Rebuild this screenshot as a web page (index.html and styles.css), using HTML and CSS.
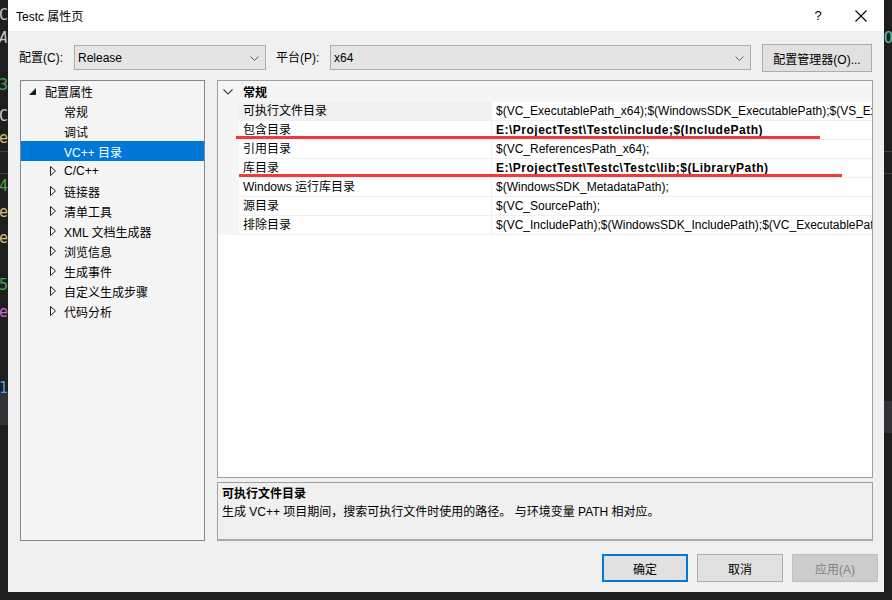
FILE: index.html
```html
<!DOCTYPE html>
<html lang="zh-CN">
<head>
<meta charset="utf-8">
<title>Testc 属性页</title>
<link rel="stylesheet" href="styles.css">
</head>
<body>
<div class="screen">
  <div class="edge edge-left">
    <div class="code c-light m7">cC</div>
    <div class="code c-light it m7">eA</div>
    <div class="code c-green m31">3</div>
    <div class="code c-light m15">cC</div>
    <div class="code c-tan m6">te</div>
    <div class="rule m5"></div>
    <div class="rule m21"></div>
    <div class="code c-green m4">4</div>
    <div class="code c-tan m10">te</div>
    <div class="code c-tan m10">te</div>
    <div class="code c-green m31">5</div>
    <div class="code c-purple m11">e(</div>
    <div class="code c-blue m60">1</div>
    <div class="band"></div>
  </div>

  <div class="dialog">
    <div class="titlebar">
      <span class="title">Testc 属性页</span>
      <div class="tb-actions">
        <span class="tb-help">?</span>
        <svg class="tb-close" width="12" height="12" viewBox="0 0 12 12"><path d="M0.5 0.5 L11.5 11.5 M11.5 0.5 L0.5 11.5" stroke="#000" stroke-width="1.1" fill="none"/></svg>
      </div>
    </div>

    <div class="config-row">
      <span class="lbl lbl-config">配置(C):</span>
      <div class="combo combo-config">
        <span>Release</span>
        <svg class="chev" width="9" height="5" viewBox="0 0 9 5"><path d="M0.5 0.5 L4.5 4.5 L8.5 0.5" stroke="#606060" fill="none"/></svg>
      </div>
      <span class="lbl lbl-platform">平台(P):</span>
      <div class="combo combo-platform">
        <span>x64</span>
        <svg class="chev" width="9" height="5" viewBox="0 0 9 5"><path d="M0.5 0.5 L4.5 4.5 L8.5 0.5" stroke="#606060" fill="none"/></svg>
      </div>
      <button class="btn btn-mgr">配置管理器(O)...</button>
    </div>

    <div class="main">
      <div class="tree">
        <div class="node lvl0">
          <span class="arrow"><svg width="7" height="7" viewBox="0 0 7 7"><path d="M7 0 L7 7 L0 7 Z" fill="#1e1e1e"/></svg></span>
          <span>配置属性</span>
        </div>
        <div class="node lvl1"><span class="arrow"></span><span>常规</span></div>
        <div class="node lvl1"><span class="arrow"></span><span>调试</span></div>
        <div class="node lvl1 selected"><span class="arrow"></span><span>VC++ 目录</span></div>
        <div class="node lvl1"><span class="arrow"><svg width="6" height="10" viewBox="0 0 6 10"><path d="M0.5 0.5 L5.5 5 L0.5 9.5 Z" stroke="#1e1e1e" fill="none"/></svg></span><span>C/C++</span></div>
        <div class="node lvl1"><span class="arrow"><svg width="6" height="10" viewBox="0 0 6 10"><path d="M0.5 0.5 L5.5 5 L0.5 9.5 Z" stroke="#1e1e1e" fill="none"/></svg></span><span>链接器</span></div>
        <div class="node lvl1"><span class="arrow"><svg width="6" height="10" viewBox="0 0 6 10"><path d="M0.5 0.5 L5.5 5 L0.5 9.5 Z" stroke="#1e1e1e" fill="none"/></svg></span><span>清单工具</span></div>
        <div class="node lvl1"><span class="arrow"><svg width="6" height="10" viewBox="0 0 6 10"><path d="M0.5 0.5 L5.5 5 L0.5 9.5 Z" stroke="#1e1e1e" fill="none"/></svg></span><span>XML 文档生成器</span></div>
        <div class="node lvl1"><span class="arrow"><svg width="6" height="10" viewBox="0 0 6 10"><path d="M0.5 0.5 L5.5 5 L0.5 9.5 Z" stroke="#1e1e1e" fill="none"/></svg></span><span>浏览信息</span></div>
        <div class="node lvl1"><span class="arrow"><svg width="6" height="10" viewBox="0 0 6 10"><path d="M0.5 0.5 L5.5 5 L0.5 9.5 Z" stroke="#1e1e1e" fill="none"/></svg></span><span>生成事件</span></div>
        <div class="node lvl1"><span class="arrow"><svg width="6" height="10" viewBox="0 0 6 10"><path d="M0.5 0.5 L5.5 5 L0.5 9.5 Z" stroke="#1e1e1e" fill="none"/></svg></span><span>自定义生成步骤</span></div>
        <div class="node lvl1"><span class="arrow"><svg width="6" height="10" viewBox="0 0 6 10"><path d="M0.5 0.5 L5.5 5 L0.5 9.5 Z" stroke="#1e1e1e" fill="none"/></svg></span><span>代码分析</span></div>
      </div>

      <div class="right">
        <div class="grid">
          <div class="grid-header">
            <span class="hdr-chev"><svg width="10" height="6" viewBox="0 0 10 6"><path d="M0.5 0.5 L5 5 L9.5 0.5" stroke="#444" fill="none" stroke-width="1.2"/></svg></span>
            <span class="hdr-text">常规</span>
          </div>
          <div class="prop active"><span class="gut"></span><span class="pname">可执行文件目录</span><span class="pval">$(VC_ExecutablePath_x64);$(WindowsSDK_ExecutablePath);$(VS_ExecutablePath);$(MSBuild_ExecutablePath);$(FxCopDir);$(PATH);</span></div>
          <div class="prop"><span class="gut"></span><span class="pname">包含目录</span><span class="pval bold">E:\ProjectTest\Testc\include;$(IncludePath)</span><span class="mark mark-inc"></span></div>
          <div class="prop"><span class="gut"></span><span class="pname">引用目录</span><span class="pval">$(VC_ReferencesPath_x64);</span></div>
          <div class="prop"><span class="gut"></span><span class="pname">库目录</span><span class="pval bold">E:\ProjectTest\Testc\Testc\lib;$(LibraryPath)</span><span class="mark mark-lib"></span></div>
          <div class="prop"><span class="gut"></span><span class="pname">Windows 运行库目录</span><span class="pval">$(WindowsSDK_MetadataPath);</span></div>
          <div class="prop"><span class="gut"></span><span class="pname">源目录</span><span class="pval">$(VC_SourcePath);</span></div>
          <div class="prop"><span class="gut"></span><span class="pname">排除目录</span><span class="pval">$(VC_IncludePath);$(WindowsSDK_IncludePath);$(VC_ExecutablePath_x64);$(MSBuild_ExecutablePath);</span></div>
        </div>
        <div class="desc">
          <div class="desc-title">可执行文件目录</div>
          <div class="desc-text">生成 VC++ 项目期间，搜索可执行文件时使用的路径。 与环境变量 PATH 相对应。</div>
        </div>
      </div>
    </div>

    <div class="footer">
      <button class="btn btn-foot btn-default">确定</button>
      <button class="btn btn-foot">取消</button>
      <button class="btn btn-foot btn-disabled">应用(A)</button>
    </div>
  </div>

  <div class="edge edge-right">
    <div class="code c-teal m30 left">O</div>
    <div class="rule m105"></div>
    <div class="rule m21"></div>
    <div class="band m227"></div>
  </div>
</div>
</body>
</html>
```

FILE: styles.css
```css
* { box-sizing: border-box; }

html, body {
  margin: 0;
  padding: 0;
  background: #1e1e1e;
}

body {
  font-family: "Liberation Sans", "Noto Sans CJK SC", sans-serif;
  font-size: 12px;
  color: #000;
}

.screen {
  display: flex;
  width: 892px;
  height: 600px;
  overflow: hidden;
  background: #1e1e1e;
}

/* background editor strips */
.edge {
  width: 8px;
  flex: none;
  display: flex;
  flex-direction: column;
  overflow: hidden;
}

.code {
  height: 16px;
  line-height: 16px;
  font-family: "DejaVu Sans Mono", monospace;
  font-size: 15px;
  white-space: nowrap;
  direction: rtl;
  text-align: right;
  overflow: hidden;
}
.code.left { direction: ltr; text-align: left; }
.it { font-style: italic; }
.c-light { color: #c8c8c8; }
.c-tan { color: #d7ba7d; }
.c-green { color: #4ea04e; }
.c-purple { color: #c068d0; }
.c-blue { color: #569cd6; }
.c-teal { color: #4ec9b0; }

.rule { height: 1px; background: #3f3f46; flex: none; }
.band { height: 32px; background: #333337; flex: none; margin-top: -3px; }

.m4 { margin-top: 4px; }
.m5 { margin-top: 5px; }
.m6 { margin-top: 6px; }
.m7 { margin-top: 7px; }
.m10 { margin-top: 10px; }
.m11 { margin-top: 11px; }
.m15 { margin-top: 15px; }
.m21 { margin-top: 21px; }
.m30 { margin-top: 30px; }
.m31 { margin-top: 31px; }
.m60 { margin-top: 60px; }
.m105 { margin-top: 105px; }
.m227 { margin-top: 227px; }

/* dialog */
.dialog {
  width: 876px;
  height: 592px;
  flex: none;
  background: #f0f0f0;
  display: flex;
  flex-direction: column;
}

.titlebar {
  height: 31px;
  flex: none;
  background: #fff;
  display: flex;
  align-items: center;
  padding-left: 8px;
}
.title { flex: 1; }
.tb-actions {
  display: flex;
  align-items: center;
}
.tb-help {
  width: 20px;
  text-align: center;
  font-size: 13px;
  margin-right: 27px;
}
.tb-close { margin-right: 17px; }

.config-row {
  height: 28px;
  margin-top: 13px;
  flex: none;
  display: flex;
  align-items: flex-start;
  padding-left: 11px;
}
.lbl {
  height: 28px;
  line-height: 28px;
  flex: none;
}
.lbl-config { width: 55px; }
.lbl-platform { width: 54px; margin-left: 10px; }

.combo {
  margin-top: 1px;
  height: 25px;
  border: 1px solid #adadad;
  background: #e5e5e5;
  display: flex;
  align-items: center;
  justify-content: space-between;
  padding: 0 6px 0 3px;
  flex: none;
}
.combo-config { width: 192px; }
.combo-platform { width: 421px; }
.chev { margin-top: 1px; }

.btn {
  font-family: inherit;
  font-size: 12px;
  color: #000;
  background: #e1e1e1;
  border: 1px solid #adadad;
  height: 28px;
  padding: 0;
  margin: 0;
  flex: none;
}
.btn-mgr { width: 110px; margin-left: 11px; }

.main {
  margin-top: 8px;
  height: 461px;
  flex: none;
  display: flex;
  gap: 12px;
  padding: 0 11px 0 12px;
}

.tree {
  width: 185px;
  flex: none;
  border: 1px solid #828790;
  background: #f5f5f5;
}
.node {
  height: 20px;
  display: flex;
  align-items: center;
  white-space: nowrap;
}
.node .arrow {
  width: 16px;
  flex: none;
  display: flex;
  align-items: center;
}
.lvl0 { padding-left: 8px; }
.lvl1 { padding-left: 27px; }
.lvl1 .arrow { padding-left: 2px; }
.selected { background: #0078d7; color: #fff; }

.right {
  flex: 1;
  display: flex;
  flex-direction: column;
  gap: 4px;
}

.grid {
  height: 398px;
  flex: none;
  border: 1px solid #a0a0a0;
  background: #fff;
  overflow: hidden;
}
.grid-header {
  height: 21px;
  background: #f5f5f5;
  display: flex;
  align-items: center;
}
.hdr-chev {
  width: 25px;
  padding-left: 5px;
  display: flex;
  align-items: center;
}
.hdr-text { font-weight: bold; }

.prop {
  height: 19px;
  display: grid;
  grid-template-columns: 21px 253px 1fr;
  position: relative;
}
.gut { background: #f5f5f5; }
.pname, .pval {
  line-height: 18px;
  border-bottom: 1px solid #f0f0f0;
  padding-left: 4px;
  white-space: nowrap;
  overflow: hidden;
}
.pname { border-right: 1px solid #f0f0f0; }
.active .pname { background: #f0f0f0; }
.bold { font-weight: bold; letter-spacing: 0.5px; }

.mark {
  position: absolute;
  height: 3px;
  background: #f23a3a;
}
.mark-inc { left: 18px; width: 584px; top: 15px; }
.mark-lib { left: 21px; width: 603px; top: 15px; }

.desc {
  height: 59px;
  flex: none;
  border: 1px solid #a0a0a0;
  border-bottom: 2px solid #a8a8a8;
  background: #f0f0f0;
  padding: 3px 4px 0;
  line-height: 16px;
}
.desc-title { font-weight: bold; }
.desc-text { margin-top: 2px; }

.footer {
  margin-top: 13px;
  height: 28px;
  flex: none;
  display: flex;
  justify-content: flex-end;
  gap: 9px;
  padding-right: 6px;
}
.btn-foot { width: 86px; }
.btn-default { border: 2px solid #0078d7; }
.btn-disabled { background: #cccccc; border-color: #bfbfbf; color: #838383; }
```
